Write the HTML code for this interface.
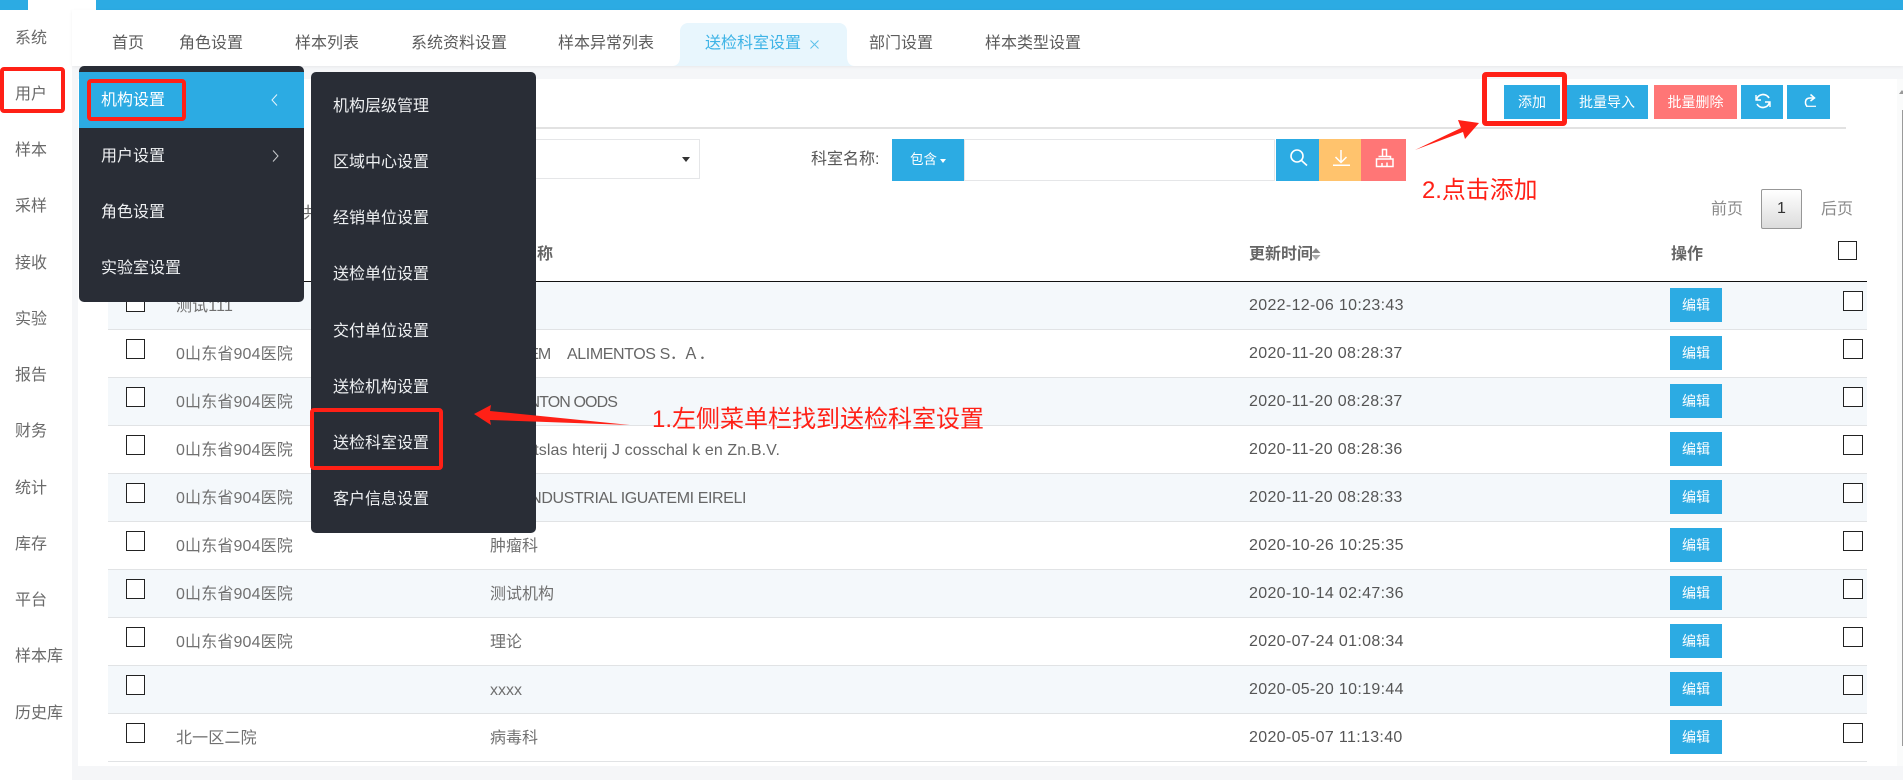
<!DOCTYPE html>
<html lang="zh">
<head>
<meta charset="utf-8">
<title>送检科室设置</title>
<style>
html,body{margin:0;padding:0;width:1903px;height:780px;overflow:hidden;background:#f5f6f8;}
body{position:relative;font-family:"Liberation Sans","Noto Sans CJK SC",sans-serif;font-size:16px;color:#666;}
div,span,svg{position:absolute;white-space:nowrap;box-sizing:border-box;}
.top{left:0;top:0;width:1903px;height:10px;background:#2cabe3;}
.topw{left:28px;top:0;width:68px;height:10px;background:#fff;}
.side{left:0;top:10px;width:72px;height:770px;background:#fff;}
.sl{left:15px;line-height:24px;height:24px;color:#6a6a6a;}
.head{left:72px;top:10px;width:1831px;height:56px;background:#fff;box-shadow:0 1px 3px rgba(0,0,0,.06);}
.tab{top:32px;line-height:24px;height:24px;color:#5c5c5c;}
.act{left:680px;top:23px;width:167px;height:43px;background:#e8f6fd;border-radius:8px 8px 0 0;}
.card{left:78px;top:79px;width:1819px;height:687px;background:#fff;}
.track{left:1897px;top:79px;width:6px;height:687px;background:#fafbfb;}
.line{left:1902px;top:110px;width:1px;height:636px;background:#9a9a9a;}
.hr{left:400px;top:127px;width:1446px;height:2px;background:#e2e2e2;}
.btn{top:85px;height:34px;line-height:34px;text-align:center;background:#2cabe3;color:#fff;font-size:14px;}
.sel{left:400px;top:139px;width:300px;height:40px;border:1px solid #e5e6e8;}
.caret{left:682px;top:157px;width:0;height:0;border-left:4px solid transparent;border-right:4px solid transparent;border-top:5px solid #333;}
.box{top:139px;height:42px;}
.hdr{top:243px;line-height:24px;height:24px;font-weight:bold;color:#666;}
.hl{left:108px;top:281px;width:1759px;height:1.5px;background:#111;}
.cb{width:20px;height:20px;border:1.5px solid #222;background:#fff;}
.r{left:108px;width:1759px;height:48px;border-bottom:1.5px solid #e1e3e5;background:#fff;}
.r.o{background:#f4f8fb;}
.r .c0{left:18px;top:9px;width:19px;}
.r .c1{left:68px;top:13px;line-height:24px;height:24px;color:#707070;letter-spacing:.15px;}
.r .c2{left:382px;top:13px;line-height:24px;height:24px;color:#707070;}
.r .c2.la{letter-spacing:-.4px;color:#666;}
.r .d{left:1141px;top:12px;line-height:24px;height:24px;color:#555;letter-spacing:.33px;}
.r .e{left:1562px;top:6px;width:52px;height:34px;line-height:35px;text-align:center;background:#2cabe3;color:#fff;font-size:14px;}
.r .c9{left:1735px;top:9px;}
.m1{left:79px;top:66px;width:225px;height:236px;background:#292d36;border-radius:5px;z-index:5;}
.m2{left:311px;top:72px;width:225px;height:461px;background:#292d36;border-radius:5px;z-index:5;}
.mi{left:22px;height:24px;line-height:24px;color:#eef0f2;}
.m1a{left:0;top:6px;width:225px;height:56px;background:#2cabe3;}
.rb{border:4px solid #ff2016;border-radius:4px;z-index:8;}
.ann{color:#ff2016;font-size:24px;line-height:30px;height:30px;z-index:8;}
</style>
</head>
<body>
<div class="top"></div><div class="topw"></div>
<div class="side"></div>
<div class="sl" style="top:27px">系统</div>
<div class="sl" style="top:83px">用户</div>
<div class="sl" style="top:139px">样本</div>
<div class="sl" style="top:195px">采样</div>
<div class="sl" style="top:252px">接收</div>
<div class="sl" style="top:308px">实验</div>
<div class="sl" style="top:364px">报告</div>
<div class="sl" style="top:420px">财务</div>
<div class="sl" style="top:477px">统计</div>
<div class="sl" style="top:533px">库存</div>
<div class="sl" style="top:589px">平台</div>
<div class="sl" style="top:645px">样本库</div>
<div class="sl" style="top:702px">历史库</div>

<div class="head"></div>
<svg style="left:672px;top:56px;z-index:2" width="183" height="10" viewBox="0 0 183 10"><path d="M0 10Q8 10 8 0H175Q175 10 183 10Z" fill="#e8f6fd"/></svg>
<div class="act" style="z-index:2"></div>
<div class="tab" style="left:112px">首页</div>
<div class="tab" style="left:179px">角色设置</div>
<div class="tab" style="left:295px">样本列表</div>
<div class="tab" style="left:411px">系统资料设置</div>
<div class="tab" style="left:558px">样本异常列表</div>
<div class="tab" style="left:705px;color:#3db3e6;z-index:3">送检科室设置</div>
<svg style="left:810px;top:40px;z-index:3" width="9" height="9" viewBox="0 0 9 9"><path d="M.5.5l8 8M8.5.5l-8 8" stroke="#5cc0ea" stroke-width="1" fill="none"/></svg>
<div class="tab" style="left:869px">部门设置</div>
<div class="tab" style="left:985px">样本类型设置</div>

<div class="card"></div>
<div class="track"></div><div class="line"></div>
<div style="left:1899px;top:90px;width:0;height:0;border-left:3px solid transparent;border-right:3px solid transparent;border-bottom:4px solid #999"></div>
<div class="hr"></div>

<div class="btn" style="left:1504px;width:56px">添加</div>
<div class="btn" style="left:1566px;width:82px">批量导入</div>
<div class="btn" style="left:1654px;width:83px;background:#ff7676">批量删除</div>
<div class="btn" style="left:1741px;width:42px"></div>
<svg style="left:1754px;top:92px" width="18" height="18" viewBox="0 0 18 18" fill="none" stroke="#fff" stroke-width="1.7"><path d="M2.500 7.500A6.800 6.800 0 0 1 15 6"/><path d="M15.500 10.500A6.800 6.800 0 0 1 3 12"/><path d="M2 3v5h5M16 15v-5h-5" stroke-width="1.4"/></svg>
<div class="btn" style="left:1787px;width:43px"></div>
<svg style="left:1803px;top:93px" width="14" height="15" viewBox="0 0 14 15" fill="none" stroke="#fff" stroke-width="1.5"><path d="M11 5H7Q2.500 5 2.500 9.500Q2.500 12 4 13"/><path d="M7.500 1.500L11.500 5L7.500 8"/><path d="M3 13.300H13" stroke-width="1.200"/></svg>

<div class="sel"></div><div class="caret"></div>
<div style="left:811px;top:148px;line-height:24px;height:24px;color:#555">科室名称:</div>
<div class="box" style="left:892px;width:72px;background:#2cabe3;color:#fff;font-size:13.500px;line-height:41px;padding-left:18px">包含</div>
<div style="left:940px;top:159px;width:0;height:0;border-left:3.500px solid transparent;border-right:3.500px solid transparent;border-top:4px solid #fff"></div>
<div class="box" style="left:964px;width:311px;border:1.500px solid #e5e6e8;background:#fff"></div>
<div class="box" style="left:1276px;width:43px;background:#2cabe3"></div>
<svg style="left:1288px;top:147px" width="22" height="22" viewBox="0 0 22 22" fill="none" stroke="#fff" stroke-width="1.600"><circle cx="9" cy="9" r="6"/><path d="M13.500 13.500L19 18.500"/></svg>
<div class="box" style="left:1319px;width:42px;background:#ffc36d"></div>
<svg style="left:1331px;top:148px" width="20" height="19" viewBox="0 0 20 19" fill="none" stroke="#fff" stroke-width="1.500"><path d="M10 2V14M4.500 9L10 14.500L15.500 9"/><path d="M2 17.300H19"/></svg>
<div class="box" style="left:1361px;width:45px;background:#ff7676"></div>
<svg style="left:1375px;top:148px" width="20" height="20" viewBox="0 0 20 20" fill="none" stroke="#fff" stroke-width="1.500"><path d="M7.500 8V1.500H11.500V8"/><path d="M3.500 8.500H15.500V11"/><path d="M1.500 11H18V18.500H1.500Z"/><path d="M7 18.500V15M12 18.500V14.500"/></svg>

<div style="left:303px;top:202px;line-height:24px;height:24px;color:#666">共</div>

<div style="left:1711px;top:198px;line-height:24px;height:24px;color:#8a8a8a">前页</div>
<div style="left:1761px;top:189px;width:41px;height:40px;line-height:38px;text-align:center;border:1px solid #979797;border-radius:2px;background:linear-gradient(#fff,#dcdcdc);color:#333">1</div>
<div style="left:1821px;top:198px;line-height:24px;height:24px;color:#8a8a8a">后页</div>

<div class="hdr" style="left:489px">科室名称</div>
<div class="hdr" style="left:1249px">更新时间</div>
<svg style="left:1311px;top:247px" width="10" height="14" viewBox="0 0 10 14"><path d="M5 1L9.500 6H.5Z" fill="#888"/><path d="M5 13L9.500 8H.5Z" fill="#aaa"/></svg>
<div class="hdr" style="left:1671px">操作</div>
<div class="cb" style="left:1838px;top:241px;width:19px;height:19px"></div>
<div class="hl"></div>

<div class="r o" style="top:282px"><div class="cb c0" style="top:10px"></div><div class="c1" style="top:13px">测试111</div><div class="d">2022-12-06 10:23:43</div><div class="e">编辑</div><div class="cb c9"></div></div>
<div class="r" style="top:330px"><div class="cb c0"></div><div class="c1">0山东省904医院</div>
<div class="c2 la" style="left:292px;width:150px;text-align:right;letter-spacing:-1.200px">SYLEM</div><div class="c2 la" style="left:459px">ALIMENTOS S．</div><div class="c2 la" style="left:575px">Ａ．</div>
<div class="d">2020-11-20 08:28:37</div><div class="e">编辑</div><div class="cb c9"></div></div>
<div class="r o" style="top:378px"><div class="cb c0"></div><div class="c1">0山东省904医院</div><div class="c2 la" style="left:292px;width:217px;text-align:right;letter-spacing:-.9px">BENTON OODS</div><div class="d">2020-11-20 08:28:37</div><div class="e">编辑</div><div class="cb c9"></div></div>
<div class="r" style="top:426px"><div class="cb c0"></div><div class="c1">0山东省904医院</div><div class="c2 la" style="left:292px;width:380px;text-align:right;letter-spacing:.1px">Stanitslas hterij J cosschal k en Zn.B.V.</div><div class="d">2020-11-20 08:28:36</div><div class="e">编辑</div><div class="cb c9"></div></div>
<div class="r o" style="top:474px"><div class="cb c0"></div><div class="c1">0山东省904医院</div><div class="c2 la" style="left:292px;width:346px;text-align:right">INDUSTRIAL IGUATEMI EIRELI</div><div class="d">2020-11-20 08:28:33</div><div class="e">编辑</div><div class="cb c9"></div></div>
<div class="r" style="top:522px"><div class="cb c0"></div><div class="c1">0山东省904医院</div><div class="c2">肿瘤科</div><div class="d">2020-10-26 10:25:35</div><div class="e">编辑</div><div class="cb c9"></div></div>
<div class="r o" style="top:570px"><div class="cb c0"></div><div class="c1">0山东省904医院</div><div class="c2">测试机构</div><div class="d">2020-10-14 02:47:36</div><div class="e">编辑</div><div class="cb c9"></div></div>
<div class="r" style="top:618px"><div class="cb c0"></div><div class="c1">0山东省904医院</div><div class="c2">理论</div><div class="d">2020-07-24 01:08:34</div><div class="e">编辑</div><div class="cb c9"></div></div>
<div class="r o" style="top:666px"><div class="cb c0"></div><div class="c1"></div><div class="c2">xxxx</div><div class="d">2020-05-20 10:19:44</div><div class="e">编辑</div><div class="cb c9"></div></div>
<div class="r" style="top:714px"><div class="cb c0"></div><div class="c1">北一区二院</div><div class="c2">病毒科</div><div class="d">2020-05-07 11:13:40</div><div class="e">编辑</div><div class="cb c9"></div></div>

<div class="m1">
<div class="m1a"></div>
<div class="mi" style="top:23px;color:#fff">机构设置</div>
<svg style="left:191px;top:27px" width="10" height="14" viewBox="0 0 10 14" fill="none" stroke="#e6f4fb" stroke-width="1"><path d="M7 1.500L2 7L7 12.500"/></svg>
<div class="mi" style="top:79px">用户设置</div>
<svg style="left:191px;top:83px" width="10" height="14" viewBox="0 0 10 14" fill="none" stroke="#c8cacd" stroke-width="1"><path d="M3 1.500L8 7L3 12.500"/></svg>
<div class="mi" style="top:135px">角色设置</div>
<div class="mi" style="top:191px">实验室设置</div>
</div>

<div class="m2">
<div class="mi" style="top:23px">机构层级管理</div>
<div class="mi" style="top:79px">区域中心设置</div>
<div class="mi" style="top:135px">经销单位设置</div>
<div class="mi" style="top:191px">送检单位设置</div>
<div class="mi" style="top:248px">交付单位设置</div>
<div class="mi" style="top:304px">送检机构设置</div>
<div class="mi" style="top:360px">送检科室设置</div>
<div class="mi" style="top:416px">客户信息设置</div>
</div>

<div class="rb" style="left:0;top:67px;width:65px;height:46px"></div>
<div class="rb" style="left:87px;top:79px;width:99px;height:42px"></div>
<div class="rb" style="left:310px;top:408px;width:133px;height:62px"></div>
<div class="rb" style="left:1482px;top:72px;width:85px;height:54px;border-width:5px"></div>

<svg style="left:0;top:0;z-index:8" width="1903" height="780" viewBox="0 0 1903 780"><polygon points="474,414 491,405 490,411 630,425 490,420 491,425" fill="#ff2016"/><polygon points="1415,150 1461,128 1458,120 1479,123 1465,139 1463,132" fill="#ff2016"/></svg>
<div class="ann" style="left:652px;top:405px">1.左侧菜单栏找到送检科室设置</div>
<div class="ann" style="left:1422px;top:176px;font-size:23.900px">2.点击添加</div>
</body>
</html>
